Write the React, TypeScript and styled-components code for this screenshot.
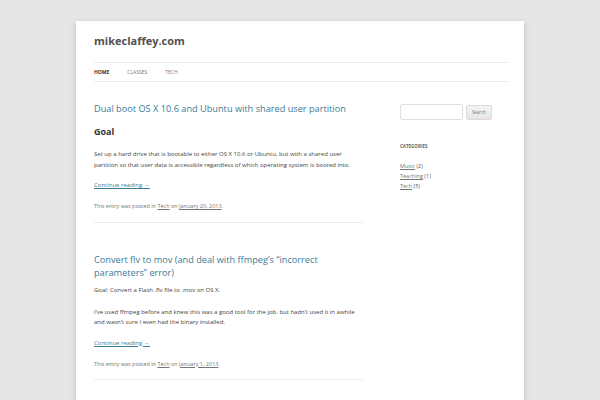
import React from 'react';
import styled, { createGlobalStyle } from 'styled-components';

const GlobalStyle = createGlobalStyle`
    html, body {
        margin: 0;
        padding: 0;
        background-color: #e6e6e6;
        font-family: "Open Sans", "Liberation Sans", sans-serif;
        color: #444;
    }
`;

const Page = styled.div`
    width: 414px;
    margin: 21px auto 0;
    padding: 0 16px 0 18px;
    background-color: #fff;
    box-shadow: 0 2px 6px rgba(100, 100, 100, 0.3);
    min-height: 379px;
`;

const Header = styled.header`
    padding-top: 12px;
`;

const SiteTitle = styled.h1`
    margin: 0;
    font-size: 11px;
    line-height: 16px;
    font-weight: 700;
    color: #515151;
`;

const Nav = styled.nav`
    margin-top: 13px;
    height: 18px;
    border-top: 1px solid #ededed;
    border-bottom: 1px solid #ededed;
    display: flex;
    align-items: center;
`;

const NavItem = styled.a<{ $current?: boolean }>`
    font-size: 5px;
    text-transform: uppercase;
    margin-right: 18px;
    color: ${p => (p.$current ? '#333' : '#7a7a7a')};
    font-weight: ${p => (p.$current ? 700 : 400)};
    text-decoration: none;
`;

const Main = styled.div`
    display: flex;
    gap: 37px;
`;

const Content = styled.main`
    width: 269px;
`;

const Article = styled.article<{ $first?: boolean }>`
    padding-top: ${p => (p.$first ? '20px' : '30px')};
    padding-bottom: ${p => (p.$first ? '11px' : '10px')};
    border-bottom: 1px solid #ededed;
`;

const EntryTitle = styled.h2`
    margin: 0;
    font-size: 9.2px;
    line-height: 13px;
    font-weight: 400;
    color: #3a7d99;
`;

const Heading = styled.h3`
    margin: 11px 0 0;
    font-size: 9px;
    line-height: 12px;
    font-weight: 700;
    color: #333;
`;

const Para = styled.p<{ $gap?: number }>`
    margin: ${p => p.$gap ?? 11}px 0 0;
    font-size: 6px;
    line-height: 10.5px;
    color: #444;
`;

const MoreLink = styled.a`
    display: block;
    margin-top: 10px;
    font-size: 6px;
    line-height: 10px;
    color: #3a7d99;
    text-decoration: underline;
`;

const Footer = styled.footer`
    margin-top: 11px;
    font-size: 5.5px;
    line-height: 10px;
    color: #757575;

    a {
        color: #757575;
        text-decoration: underline;
    }
`;

const Sidebar = styled.aside`
    width: 108px;
    padding-top: 22px;
`;

const SearchRow = styled.div`
    display: flex;
    align-items: center;
    gap: 3px;
`;

const SearchInput = styled.div`
    width: 61px;
    height: 14px;
    border: 1px solid #e0e0e0;
    border-radius: 2px;
    background: #fff;
`;

const SearchButton = styled.div`
    width: 24px;
    height: 13px;
    border: 1px solid #dadada;
    border-radius: 2px;
    background: linear-gradient(#f4f4f4, #e6e6e6);
    font-size: 4.5px;
    color: #7c7c7c;
    display: flex;
    align-items: center;
    justify-content: center;
`;

const WidgetTitle = styled.h3`
    margin: 22px 0 0;
    font-size: 4.5px;
    line-height: 8px;
    font-weight: 700;
    text-transform: uppercase;
    color: #636363;
`;

const CatList = styled.ul`
    list-style: none;
    margin: 11px 0 0;
    padding: 0;
`;

const CatItem = styled.li`
    font-size: 5.5px;
    line-height: 10px;
    color: #555;

    a {
        color: #757575;
        text-decoration: underline;
    }
`;

const posts = [
    {
        title: 'Dual boot OS X 10.6 and Ubuntu with shared user partition',
        date: 'January 20, 2013',
    },
    {
        title: 'Convert flv to mov (and deal with ffmpeg\u2019s \u201cincorrect parameters\u201d error)',
        date: 'January 1, 2013',
    },
];

const categories = [
    { name: 'Music', count: 2 },
    { name: 'Teaching', count: 1 },
    { name: 'Tech', count: 5 },
];

const App = () => {
    return (
        <>
            <GlobalStyle />
            <Page>
                <Header>
                    <SiteTitle>mikeclaffey.com</SiteTitle>
                    <Nav>
                        <NavItem $current>Home</NavItem>
                        <NavItem>Classes</NavItem>
                        <NavItem>Tech</NavItem>
                    </Nav>
                </Header>
                <Main>
                    <Content>
                        <Article $first>
                            <EntryTitle>{posts[0].title}</EntryTitle>
                            <Heading>Goal</Heading>
                            <Para>
                                Set up a hard drive that is bootable to either OS X 10.6 or Ubuntu, but with a shared user
                                partition so that user data is accessible regardless of which operating system is booted into.
                            </Para>
                            <MoreLink>Continue reading &rarr;</MoreLink>
                            <Footer>
                                This entry was posted in <a>Tech</a> on <a>{posts[0].date}</a>.
                            </Footer>
                        </Article>
                        <Article>
                            <EntryTitle>{posts[1].title}</EntryTitle>
                            <Para $gap={6}>Goal: Convert a Flash .flv file to .mov on OS X.</Para>
                            <Para>
                                I&rsquo;ve used ffmpeg before and knew this was a good tool for the job, but hadn&rsquo;t used it in awhile
                                and wasn&rsquo;t sure I even had the binary installed.
                            </Para>
                            <MoreLink>Continue reading &rarr;</MoreLink>
                            <Footer>
                                This entry was posted in <a>Tech</a> on <a>{posts[1].date}</a>.
                            </Footer>
                        </Article>
                    </Content>
                    <Sidebar>
                        <SearchRow>
                            <SearchInput />
                            <SearchButton>Search</SearchButton>
                        </SearchRow>
                        <WidgetTitle>Categories</WidgetTitle>
                        <CatList>
                            {categories.map(c => (
                                <CatItem key={c.name}>
                                    <a>{c.name}</a> ({c.count})
                                </CatItem>
                            ))}
                        </CatList>
                    </Sidebar>
                </Main>
            </Page>
        </>
    );
};

export default App;
